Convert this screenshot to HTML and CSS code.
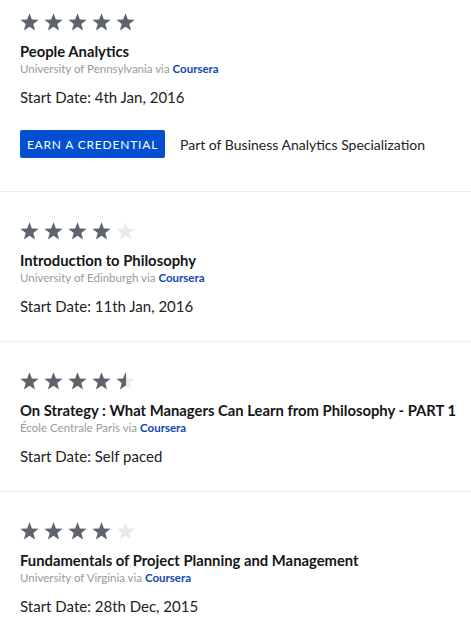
FILE: index.html
```html
<!DOCTYPE html>
<html>
<head>
<meta charset="utf-8">
<link rel="stylesheet" href="styles.css">
</head>
<body>
<svg width="0" height="0" class="defs">
  <defs>
    <path id="star" d="M9.5 0.3 L11.9 6.5 L18.6 6.8 L13.3 11 L15.1 17.6 L9.5 13.8 L3.9 17.6 L5.7 11 L0.4 6.8 L7.1 6.5 Z"/>
    <linearGradient id="half">
      <stop offset="50%" stop-color="#5d646b"/>
      <stop offset="50%" stop-color="#e8e9ea"/>
    </linearGradient>
  </defs>
</svg>
<main class="list">
  <section class="card card-first">
    <div class="stars">
      <svg class="star full" viewBox="0 0 19 18"><use href="#star"/></svg>
      <svg class="star full" viewBox="0 0 19 18"><use href="#star"/></svg>
      <svg class="star full" viewBox="0 0 19 18"><use href="#star"/></svg>
      <svg class="star full" viewBox="0 0 19 18"><use href="#star"/></svg>
      <svg class="star full" viewBox="0 0 19 18"><use href="#star"/></svg>
    </div>
    <h2 class="title">People Analytics</h2>
    <p class="source">University of Pennsylvania <span class="via">via</span> <a class="provider">Coursera</a></p>
    <p class="date">Start Date: 4th Jan, 2016</p>
    <div class="actions">
      <button class="btn">EARN A CREDENTIAL</button>
      <span class="part">Part of Business Analytics Specialization</span>
    </div>
  </section>
  <section class="card">
    <div class="stars">
      <svg class="star full" viewBox="0 0 19 18"><use href="#star"/></svg>
      <svg class="star full" viewBox="0 0 19 18"><use href="#star"/></svg>
      <svg class="star full" viewBox="0 0 19 18"><use href="#star"/></svg>
      <svg class="star full" viewBox="0 0 19 18"><use href="#star"/></svg>
      <svg class="star empty" viewBox="0 0 19 18"><use href="#star"/></svg>
    </div>
    <h2 class="title">Introduction to Philosophy</h2>
    <p class="source">University of Edinburgh <span class="via">via</span> <a class="provider">Coursera</a></p>
    <p class="date">Start Date: 11th Jan, 2016</p>
  </section>
  <section class="card">
    <div class="stars">
      <svg class="star full" viewBox="0 0 19 18"><use href="#star"/></svg>
      <svg class="star full" viewBox="0 0 19 18"><use href="#star"/></svg>
      <svg class="star full" viewBox="0 0 19 18"><use href="#star"/></svg>
      <svg class="star full" viewBox="0 0 19 18"><use href="#star"/></svg>
      <svg class="star half" viewBox="0 0 19 18"><use href="#star"/></svg>
    </div>
    <h2 class="title">On Strategy : What Managers Can Learn from Philosophy - PART 1</h2>
    <p class="source">École Centrale Paris <span class="via">via</span> <a class="provider">Coursera</a></p>
    <p class="date">Start Date: Self paced</p>
  </section>
  <section class="card">
    <div class="stars">
      <svg class="star full" viewBox="0 0 19 18"><use href="#star"/></svg>
      <svg class="star full" viewBox="0 0 19 18"><use href="#star"/></svg>
      <svg class="star full" viewBox="0 0 19 18"><use href="#star"/></svg>
      <svg class="star full" viewBox="0 0 19 18"><use href="#star"/></svg>
      <svg class="star empty" viewBox="0 0 19 18"><use href="#star"/></svg>
    </div>
    <h2 class="title">Fundamentals of Project Planning and Management</h2>
    <p class="source">University of Virginia <span class="via">via</span> <a class="provider">Coursera</a></p>
    <p class="date">Start Date: 28th Dec, 2015</p>
  </section>
</main>
</body>
</html>
```

FILE: styles.css
```css
html, body {
  margin: 0;
  padding: 0;
  background: #ffffff;
}
body {
  font-family: Lato, "Open Sans", "Liberation Sans", sans-serif;
  color: #1c1c1c;
  width: 471px;
  overflow: hidden;
}
.defs {
  position: absolute;
  width: 0;
  height: 0;
}
.list {
  display: flex;
  flex-direction: column;
}
.card {
  padding: 30px 20px 24px;
  border-bottom: 1px solid #ebebef;
  display: flex;
  flex-direction: column;
}
.card-first {
  padding-top: 13px;
  padding-bottom: 33px;
}
.stars {
  display: flex;
  gap: 5px;
  height: 18px;
}
.star {
  width: 19px;
  height: 18px;
  display: block;
}
.star.full { fill: #5d646b; }
.star.empty { fill: #e8e9ea; }
.star.half { fill: url(#half); }
.title {
  margin: 11px 0 0;
  font-size: 14.8px;
  line-height: 19px;
  font-weight: 700;
  color: #161616;
  white-space: nowrap;
}
.source {
  margin: 0;
  font-size: 11.5px;
  line-height: 15px;
  color: #9a9a9a;
}
.via { color: #9a9a9a; }
.provider {
  color: #1246b4;
  font-weight: 700;
}
.date {
  margin: 10px 0 0;
  font-size: 15px;
  line-height: 22px;
  color: #222222;
}
.actions {
  margin-top: 22px;
  display: flex;
  align-items: center;
  gap: 15px;
}
.btn {
  height: 28px;
  width: 145px;
  padding: 0;
  border: none;
  border-radius: 2px;
  background: #0150d1;
  color: #ffffff;
  font-family: Lato, "Open Sans", "Liberation Sans", sans-serif;
  font-size: 12px;
  letter-spacing: 0.8px;
  font-weight: 400;
}
.part {
  font-size: 14px;
  color: #222222;
}
```
